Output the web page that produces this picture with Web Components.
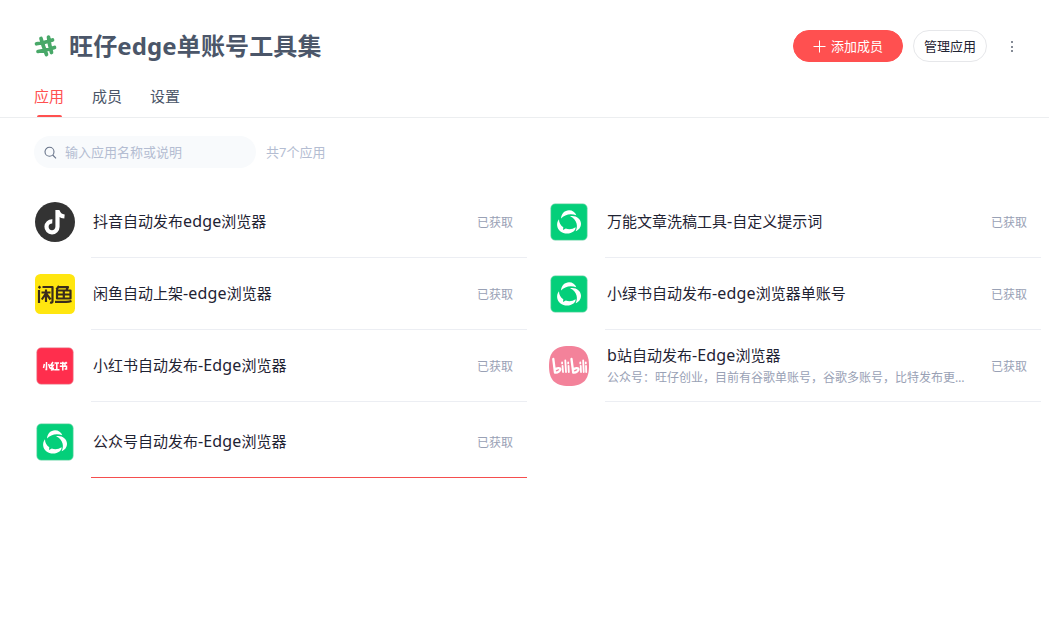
<!DOCTYPE html>
<html lang="zh-CN"><head><meta charset="utf-8"><title>旺仔edge单账号工具集</title>
<style>
html,body{margin:0;height:100%;background:#fff}
body{font-family:"Noto Sans","Noto Sans CJK SC",sans-serif;color:#1f2333;overflow:hidden}
</style></head><body>
<tool-page></tool-page>
<script>
const define=(name,html,init)=>customElements.define(name,class extends HTMLElement{
  constructor(){super();this.attachShadow({mode:'open'}).innerHTML=html;}
  connectedCallback(){if(init)init(this,this.shadowRoot);}
});

const wechat=`<svg width="40" height="40" viewBox="0 0 40 40"><rect x="1.7" y="1.7" width="36.6" height="36.6" rx="4.5" fill="#04cf7a" stroke="#a9dfc7" stroke-width=".6"/>
<g fill="#fff"><path d="M12 16.500C12.300 11.500 15.800 8.300 20 8.200C23.500 8.200 26.300 10.300 27.300 13.200C21.500 11 15.500 12.500 12 16.500Z"/>
<path d="M21 14.300C26.500 13 31.800 16.500 32 21.500C32 25.300 29.800 28.200 26.600 29.200C29.300 24.500 28.200 17.500 21 14.300Z"/>
<path d="M10 17.200C6.900 21 7.800 26.300 11.200 29.200C15 32.300 21 32.200 24.500 29.500C26 28.200 26.800 26.700 26.600 25.300C23.500 27.500 19.500 27.800 16.800 26.500L14 27.900L14.300 25.200C11.500 23.300 10 20.500 10 17.200Z"/></g></svg>`;
const icons={
 douyin:`<svg width="40" height="40" viewBox="0 0 40 40"><circle cx="20" cy="20" r="20" fill="#333"/><path d="M22.500 8V24.800A5.500 5.500 0 1 1 17.300 19.300M22.500 8.500C23.500 12.500 26 14.200 29.500 14.500" fill="none" stroke="#fff" stroke-width="4.200"/></svg>`,
 xianyu:`<svg width="40" height="40" viewBox="0 0 40 40"><rect width="40" height="40" rx="5.500" fill="#ffe60f"/><g fill="none" stroke="#392b1c" stroke-width="2.200" stroke-linejoin="round"><path d="M4 16V29M3.500 12.500L5.500 14M7.500 13H17.500V27.500Q17.500 29 15 28.500M6.500 18.500H15.500M11 15.500V28M10.500 20L6.800 25.500M11.500 20L15.500 25.500"/><path d="M24 12L21.500 15.500M23 13.200H33L31.500 15.700M21 16.500H35.500V24.500H22V16.500M23 20.500H35M28.800 16V24.500M20 27.800H31Q34 27.800 36.500 27"/></g></svg>`,
 xhs:`<svg width="40" height="40" viewBox="0 0 40 40"><rect x="1.700" y="1.700" width="36.600" height="36.600" rx="4.500" fill="#ff2e4d" stroke="#e7a6ae" stroke-width=".6"/><g fill="none" stroke="#fff" stroke-width="1.500"><path d="M11.500 16V23.500H10.400M9.400 18L8.500 22M13.600 18L14.900 22M18 16L15.800 19.300H18.300L15.900 22.300H19M15.800 24L19 23.500M19.500 17H24M21.800 17V23.500M19.200 23.800H24.500M25 17.300H30V20M24.800 20.300H31.500V23H29.700M27.800 15.700V24.500M30.500 16L32 17.500"/></g></svg>`,
 bili:`<svg width="40" height="40" viewBox="0 0 40 40"><path d="M20 0C35 0 40 7 40 20S35 40 20 40S0 33 0 20S5 0 20 0Z" fill="#f3829a"/><g fill="none" stroke="#fff" stroke-linecap="round" stroke-linejoin="round"><path stroke-width="2.300" d="M4.300 13L6 26.500C9 27 11.500 24.600 11.400 23.200C11.200 21.500 7.800 22 5.800 23.600M22.500 13L24.200 26.500C27.200 27 29.700 24.600 29.600 23.200C29.400 21.500 26 22 24 23.600"/><path stroke-width="1.800" d="M13.500 19.800L14 26M16.300 14.500L17 26M19.500 19.800L19.800 26M31.700 19.800L32 26M34.200 14.500L34.700 26M37 19.800L37.200 26M13.100 16.500V17.400M19.200 16.500V17.400M31.300 16.500V17.400M36.800 16.500V17.400"/></g></svg>`,
 wechat};

define('app-icon','<style>:host{display:block;width:40px;height:40px;flex:none}svg{display:block}</style><div></div>',(h,r)=>{r.querySelector('div').innerHTML=icons[h.getAttribute('name')]||'';});

define('app-row',`<style>
:host{display:flex;height:72px;align-items:stretch;padding-left:1px}
.icon{padding-top:16px;width:40px;flex:none}
.body{margin-left:16px;flex:1;min-width:0;box-sizing:border-box;display:flex;align-items:center;border-bottom:1px solid #eceef3;padding:0 14px 0 2px}
:host([last]){height:76px}:host([last]) .icon{padding-top:20px}
:host([last]) .body{padding-top:4px;border-color:#f54e4e}
.text{flex:1;min-width:0;white-space:nowrap;margin-right:24px;padding-bottom:2px}
.name{font-size:15px;line-height:22px;height:22px}
::slotted(span){font-size:16px;line-height:20px;letter-spacing:.15px}
.desc{font-size:12px;line-height:18px;margin-top:2px;color:#99a1b5;overflow:hidden;text-overflow:ellipsis}
.desc:empty{display:none}
:host([desc]) .text{padding-bottom:1px}:host([desc]) .desc{margin-top:3px}
.state{font-size:12px;line-height:18px;color:#99a1b5;padding-top:2px}
</style><div class="icon"></div><div class="body"><div class="text"><div class="name"><slot></slot></div><div class="desc"></div></div><span class="state">已获取</span></div>`,
(h,r)=>{
  r.querySelector('.icon').innerHTML='<app-icon name="'+h.getAttribute('icon')+'"></app-icon>';
  r.querySelector('.desc').textContent=h.getAttribute('desc')||'';
  h.innerHTML=h.textContent.replace(/[-A-Za-z]+/g,'<span>$&</span>');
});

define('app-list',`<style>:host{display:grid;grid-template-columns:493px 493px;column-gap:21px;padding:18px 0 0 34px}</style><slot></slot>`);

define('pill-button',`<style>:host{display:flex;box-sizing:border-box;height:32px;border-radius:16px;align-items:center;justify-content:center;font-size:13px;border:1px solid #e6e7ea;width:74px;white-space:nowrap}
.label{padding-bottom:2px}
:host([primary]){width:110px;background:#ff5050;border-color:#ff5050;color:#fff;gap:5px}</style><slot name="icon"></slot><span class="label"><slot></slot></span>`);

define('page-header',`<style>
:host{display:flex;height:32px;padding:30px 29px 0 34px;align-items:center}
h1{font-size:24px;letter-spacing:.13px;line-height:32px;font-weight:700;color:#4b5669;margin:0 0 0 12px;flex:1;white-space:nowrap}
pill-button+pill-button{margin-left:10px}
svg{display:block}.more{margin-left:17px}
</style><svg width="23" height="24" viewBox="0 0 23 24"><path d="M7 4.500L9 11L12.500 20.500M14.500 3L15.500 10L17.500 18.500M2.500 9.800L10 8.500L18.500 6M4 17.500L12 16L20.500 13.500" fill="none" stroke="#48a868" stroke-width="3.700" stroke-linecap="round" stroke-linejoin="round"/></svg>
<h1>旺仔edge单账号工具集</h1>
<pill-button primary><svg slot="icon" width="13" height="13" viewBox="0 0 13 13"><path d="M6.500 .5V12.500M.5 6.500H12.500" stroke="#fff"/></svg>添加成员</pill-button><pill-button>管理应用</pill-button>
<svg class="more" width="16" height="16" viewBox="0 0 16 16" fill="#858b96"><rect x="7" y="3" width="2" height="2"/><rect x="7" y="8" width="2" height="2"/><rect x="7" y="12" width="2" height="2"/></svg>`);

define('tab-bar',`<style>
:host{display:flex;gap:28px;height:55px;padding-left:34px;border-bottom:1px solid #eceef0;font-size:15px;color:#4b5669}
span{width:30px;line-height:22px;padding-top:23px;height:32px;display:flex;flex-direction:column;align-items:center;white-space:nowrap}
.on{color:#ff5050}.on:after{content:"";width:25px;height:3px;margin-top:8px;border-radius:3px 3px 0 0;background:#ff5050}
</style><span class="on">应用</span><span>成员</span><span>设置</span>`);

define('search-bar',`<style>
:host{display:flex;height:32px;padding:18px 0 0 34px;align-items:center;font-size:13px;color:#b4bdd2}
.box{width:222px;box-sizing:border-box;height:32px;border-radius:16px;background:#f8fafc;display:flex;align-items:center;padding-left:10px;margin-right:10px}
svg{margin-right:8px}
span{padding-bottom:2px}
</style><div class="box"><svg width="13" height="13" viewBox="0 0 13 13" fill="none" stroke="#68748a" stroke-width="1.100"><circle cx="5.500" cy="5.700" r="4.500"/><path d="M8.700 9L12 12.300"/></svg><span>输入应用名称或说明</span></div><span>共7个应用</span>`);

define('tool-page',`<style>:host{display:block}</style><page-header></page-header><tab-bar></tab-bar><search-bar></search-bar><app-list>
<app-row icon="douyin">抖音自动发布edge浏览器</app-row><app-row icon="wechat">万能文章洗稿工具-自定义提示词</app-row>
<app-row icon="xianyu">闲鱼自动上架-edge浏览器</app-row><app-row icon="wechat">小绿书自动发布-edge浏览器单账号</app-row>
<app-row icon="xhs">小红书自动发布-Edge浏览器</app-row><app-row icon="bili" desc="公众号：旺仔创业，目前有谷歌单账号，谷歌多账号，比特发布更多应用">b站自动发布-Edge浏览器</app-row>
<app-row icon="wechat" last>公众号自动发布-Edge浏览器</app-row></app-list>`);
</script></body></html>
